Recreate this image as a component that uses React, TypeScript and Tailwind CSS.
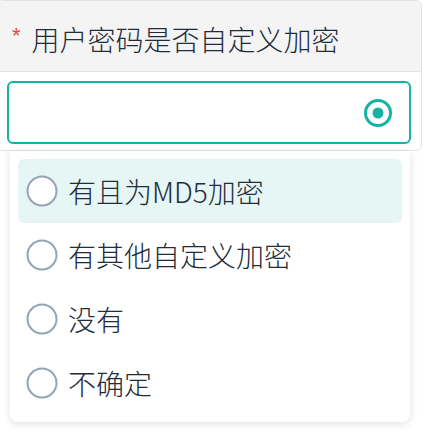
import React from "react";

const font = { fontFamily: '"Noto Sans CJK SC", "Noto Sans", sans-serif' };

function Radio() {
  return (
    <svg width="32" height="32" viewBox="0 0 32 32" className="shrink-0">
      <circle cx="16" cy="16" r="14.5" fill="white" stroke="#93a3ba" strokeWidth="2" />
    </svg>
  );
}

export default function App() {
  const options = ["有且为MD5加密", "有其他自定义加密", "没有", "不确定"];
  return (
    <div className="w-[424px] h-[437px] bg-white overflow-hidden" style={font}>
      <div className="ml-[-3px] w-[425px] border border-[#e3e3e3] rounded-md bg-white">
        <div className="h-[71px] bg-[#f4f4f4] border-b border-[#e3e3e3] rounded-t-md flex items-center pl-[14px] pt-[6px]">
          <span className="text-[22px] text-[#ef4444] mr-[11px] leading-none mt-[-6px]" style={{ fontFamily: '"Liberation Sans", sans-serif' }}>*</span>
          <span className="text-[28px] leading-none font-light text-[#222c3a]">用户密码是否自定义加密</span>
        </div>
        <div className="pt-[9px] pb-[6px] pl-[9px]">
          <div className="w-[404px] h-[63px] border-2 border-[#14b3a3] rounded-[6px] flex items-center justify-end pr-[16px]">
            <svg width="30" height="30" viewBox="0 0 30 30">
              <circle cx="15" cy="15" r="12.5" fill="white" stroke="#14b3a3" strokeWidth="3" />
              <circle cx="15" cy="15" r="5.5" fill="#14b3a3" />
            </svg>
          </div>
        </div>
      </div>
      <div className="ml-[10px] w-[400px] bg-white rounded-b-lg shadow-[0_2px_8px_rgba(0,0,0,0.12)] pt-[8px] pb-[7px] px-[8px]">
        {options.map((o, i) => (
          <div
            key={o}
            className={`h-[64px] flex items-center pl-[8px] gap-[10px] rounded-[6px] ${i === 0 ? "bg-[#e6f6f5]" : ""}`}
          >
            <Radio />
            <span className="text-[28px] leading-none font-light text-[#222c3a]">{o}</span>
          </div>
        ))}
      </div>
    </div>
  );
}
